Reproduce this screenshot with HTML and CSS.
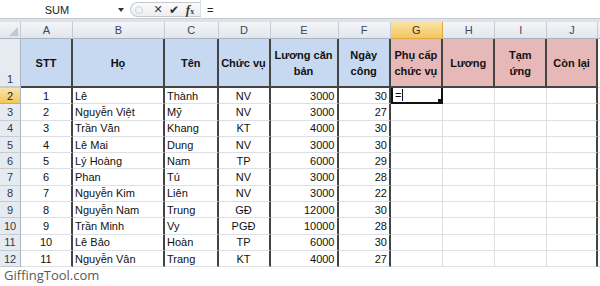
FILE: index.html
```html
<!DOCTYPE html>
<html lang="vi">
<head>
<meta charset="utf-8">
<title>Excel</title>
<link rel="stylesheet" href="styles.css">
</head>
<body>
<div class="fbar">
  <div class="namebox"><span class="nb-text">SUM</span><span class="nb-arrow"></span></div>
  <div class="pill">
    <span class="grip"></span>
    <span class="ico x">✕</span>
    <span class="ico ok">✔</span>
    <span class="ico fx"><i>f</i><small>x</small></span>
  </div>
  <div class="formula">=</div>
</div>
<div class="sheet">
  <div class="ch corner"><span class="tri"></span></div>
  <div class="ch">A</div><div class="ch">B</div><div class="ch">C</div><div class="ch">D</div><div class="ch">E</div><div class="ch">F</div><div class="ch chsel">G</div><div class="ch">H</div><div class="ch">I</div><div class="ch">J</div><div class="ch last"></div>

  <div class="rh rh1">1</div>
  <div class="c t1 blue">STT</div><div class="c t1 blue">Họ</div><div class="c t1 blue">Tên</div><div class="c t1 blue">Chức vụ</div><div class="c t1 blue">Lương căn<br>bản</div><div class="c t1 blue">Ngày<br>công</div><div class="c t1 pink">Phụ cấp<br>chức vụ</div><div class="c t1 pink">Lương</div><div class="c t1 pink">Tạm<br>ứng</div><div class="c t1 pink">Còn lại</div><div class="c end"></div>

  <div class="rh rhsel">2</div>
  <div class="c k mid">1</div><div class="c k">Lê</div><div class="c k">Thành</div><div class="c k mid">NV</div><div class="c k num">3000</div><div class="c k num">30</div><div class="c sel">=<span class="caret"></span></div><div class="c"></div><div class="c"></div><div class="c k"></div><div class="c end"></div>

  <div class="rh">3</div>
  <div class="c k mid">2</div><div class="c k">Nguyễn Việt</div><div class="c k">Mỹ</div><div class="c k mid">NV</div><div class="c k num">3000</div><div class="c k num">27</div><div class="c"></div><div class="c"></div><div class="c"></div><div class="c k"></div><div class="c end"></div>

  <div class="rh">4</div>
  <div class="c k mid">3</div><div class="c k">Trần Văn</div><div class="c k">Khang</div><div class="c k mid">KT</div><div class="c k num">4000</div><div class="c k num">30</div><div class="c"></div><div class="c"></div><div class="c"></div><div class="c k"></div><div class="c end"></div>

  <div class="rh">5</div>
  <div class="c k mid">4</div><div class="c k">Lê Mai</div><div class="c k">Dung</div><div class="c k mid">NV</div><div class="c k num">3000</div><div class="c k num">30</div><div class="c"></div><div class="c"></div><div class="c"></div><div class="c k"></div><div class="c end"></div>

  <div class="rh">6</div>
  <div class="c k mid">5</div><div class="c k">Lý Hoàng</div><div class="c k">Nam</div><div class="c k mid">TP</div><div class="c k num">6000</div><div class="c k num">29</div><div class="c"></div><div class="c"></div><div class="c"></div><div class="c k"></div><div class="c end"></div>

  <div class="rh">7</div>
  <div class="c k mid">6</div><div class="c k">Phan</div><div class="c k">Tú</div><div class="c k mid">NV</div><div class="c k num">3000</div><div class="c k num">28</div><div class="c"></div><div class="c"></div><div class="c"></div><div class="c k"></div><div class="c end"></div>

  <div class="rh">8</div>
  <div class="c k mid">7</div><div class="c k">Nguyễn Kim</div><div class="c k">Liên</div><div class="c k mid">NV</div><div class="c k num">3000</div><div class="c k num">22</div><div class="c"></div><div class="c"></div><div class="c"></div><div class="c k"></div><div class="c end"></div>

  <div class="rh">9</div>
  <div class="c k mid">8</div><div class="c k">Nguyễn Nam</div><div class="c k">Trung</div><div class="c k mid">GĐ</div><div class="c k num">12000</div><div class="c k num">30</div><div class="c"></div><div class="c"></div><div class="c"></div><div class="c k"></div><div class="c end"></div>

  <div class="rh">10</div>
  <div class="c k mid">9</div><div class="c k">Trần Minh</div><div class="c k">Vy</div><div class="c k mid">PGĐ</div><div class="c k num">10000</div><div class="c k num">28</div><div class="c"></div><div class="c"></div><div class="c"></div><div class="c k"></div><div class="c end"></div>

  <div class="rh">11</div>
  <div class="c k mid">10</div><div class="c k">Lê Bảo</div><div class="c k">Hoàn</div><div class="c k mid">TP</div><div class="c k num">6000</div><div class="c k num">30</div><div class="c"></div><div class="c"></div><div class="c"></div><div class="c k"></div><div class="c end"></div>

  <div class="rh">12</div>
  <div class="c k mid">11</div><div class="c k">Nguyễn Vân</div><div class="c k">Trang</div><div class="c k mid">KT</div><div class="c k num">4000</div><div class="c k num">27</div><div class="c"></div><div class="c"></div><div class="c"></div><div class="c k"></div><div class="c end"></div>
</div>
<div class="footer">GiffingTool.com</div>
</body>
</html>
```
FILE: styles.css
```css
* { box-sizing: border-box; }
html, body { margin: 0; padding: 0; background: #fff; }
body { width: 600px; height: 286px; overflow: hidden; font-family: "Liberation Sans", Arial, sans-serif; }

.fbar {
  height: 22px;
  display: flex;
  align-items: stretch;
  background: #fff;
  border-bottom: 3px solid #dfe2e7;
  box-shadow: inset 0 -1px 0 #c9cdd3;
}
.namebox {
  width: 130px;
  display: flex;
  align-items: center;
  font-size: 11px;
  color: #222;
}
.nb-text { width: 114px; text-align: center; }
.nb-arrow {
  width: 0; height: 0;
  border-left: 3px solid transparent;
  border-right: 3px solid transparent;
  border-top: 4px solid #333;
  margin-left: 4px;
}
.pill {
  width: 70px;
  margin: 2px 0;
  border: 1px solid #c5cad1;
  border-right: none;
  border-radius: 9px 0 0 9px;
  background: linear-gradient(#fbfbfc, #eceef1);
  display: flex;
  align-items: center;
  padding-left: 4px;
}
.grip {
  width: 8px; height: 8px;
  border-radius: 50%;
  border: 1px solid #cfd3d9;
  background: #f3f4f6;
  margin-right: 7px;
}
.ico { color: #333; width: 16px; text-align: center; line-height: 1; }
.ico.x { font-family: "DejaVu Sans", sans-serif; font-weight: bold; font-size: 11px; color: #3a3a3a; }
.ico.ok { font-family: "DejaVu Sans", sans-serif; font-size: 12px; color: #2f2f2f; }
.ico.fx { font-family: "Liberation Serif", serif; font-size: 13px; font-weight: bold; color: #3a3a3a; }
.ico.fx small { font-size: 8px; }
.formula {
  flex: 1;
  border-left: 1px solid #dadde2;
  font-size: 11px;
  padding-left: 6px;
  display: flex;
  align-items: center;
  color: #222;
}

.sheet {
  display: grid;
  grid-template-columns: 21px 52px 92px 53.5px 52px 68px 52.4px 52px 52.5px 51.7px 51px 1fr;
  grid-template-rows: 17px 49px repeat(11, 16.3px);
  font-size: 11px;
  color: #111;
}
.ch {
  background: linear-gradient(#f3f5f8, #e2e6ec);
  border-right: 1px solid #c6ccd4;
  border-bottom: 1px solid #a9b4c2;
  color: #3b4656;
  display: flex;
  align-items: center;
  justify-content: center;
  font-size: 11px;
}
.ch.corner { position: relative; }
.tri {
  position: absolute; right: 2px; bottom: 2px;
  width: 0; height: 0;
  border-left: 9px solid transparent;
  border-bottom: 9px solid #c2c8d0;
}
.ch.chsel {
  background: linear-gradient(#fbe3a8, #f4c65c);
  border-right-color: #e1a944;
  border-bottom-color: #e1a944;
  color: #333;
}
.ch.last { border-right: none; }

.rh {
  background: #e6ebf2;
  border-right: 1px solid #a9b4c2;
  border-bottom: 1px solid #c6ccd4;
  color: #2e3a4b;
  display: flex;
  align-items: center;
  justify-content: center;
  font-size: 11px;
}
.rh1 { align-items: flex-end; padding-bottom: 1px; border-bottom: 2px solid #c6ccd4; }
.rhsel { background: linear-gradient(#fbe3a8, #f4c65c); border-bottom-color: #e1a944; color: #222; }

.c {
  border-right: 1px solid #dcdfe3;
  border-bottom: 1px solid #dcdfe3;
  padding: 0 2px;
  display: flex;
  align-items: center;
  white-space: nowrap;
  overflow: hidden;
}
.c.k { border-right: 2px solid #444; }
.c.mid { justify-content: center; }
.c.num { justify-content: flex-end; padding-right: 2px; }
.c.end { border-right: none; }

.t1 {
  font-weight: bold;
  justify-content: center;
  text-align: center;
  line-height: 16px;
  border-right: 2px solid #444;
  border-bottom: 2px solid #444;
  white-space: normal;
}
.c.end { border-bottom-color: #dcdfe3; }
.blue { background: #c6d9f1; }
.pink { background: #e6b9b8; }

.sel {
  position: relative;
  border: 2px solid #111;
  border-top: none;
  padding-left: 2px;
}
.sel::after {
  content: "";
  position: absolute;
  right: -3px;
  bottom: -3px;
  width: 5px;
  height: 5px;
  background: #111;
  border: 1px solid #fff;
}
.caret {
  display: inline-block;
  width: 1px;
  height: 12px;
  background: #111;
  margin-left: 1px;
}

.footer {
  font-family: "Open Sans", sans-serif;
  font-size: 13px;
  color: #5a5a5a;
  padding: 0 0 0 4px;
  line-height: 17px;
}
```
